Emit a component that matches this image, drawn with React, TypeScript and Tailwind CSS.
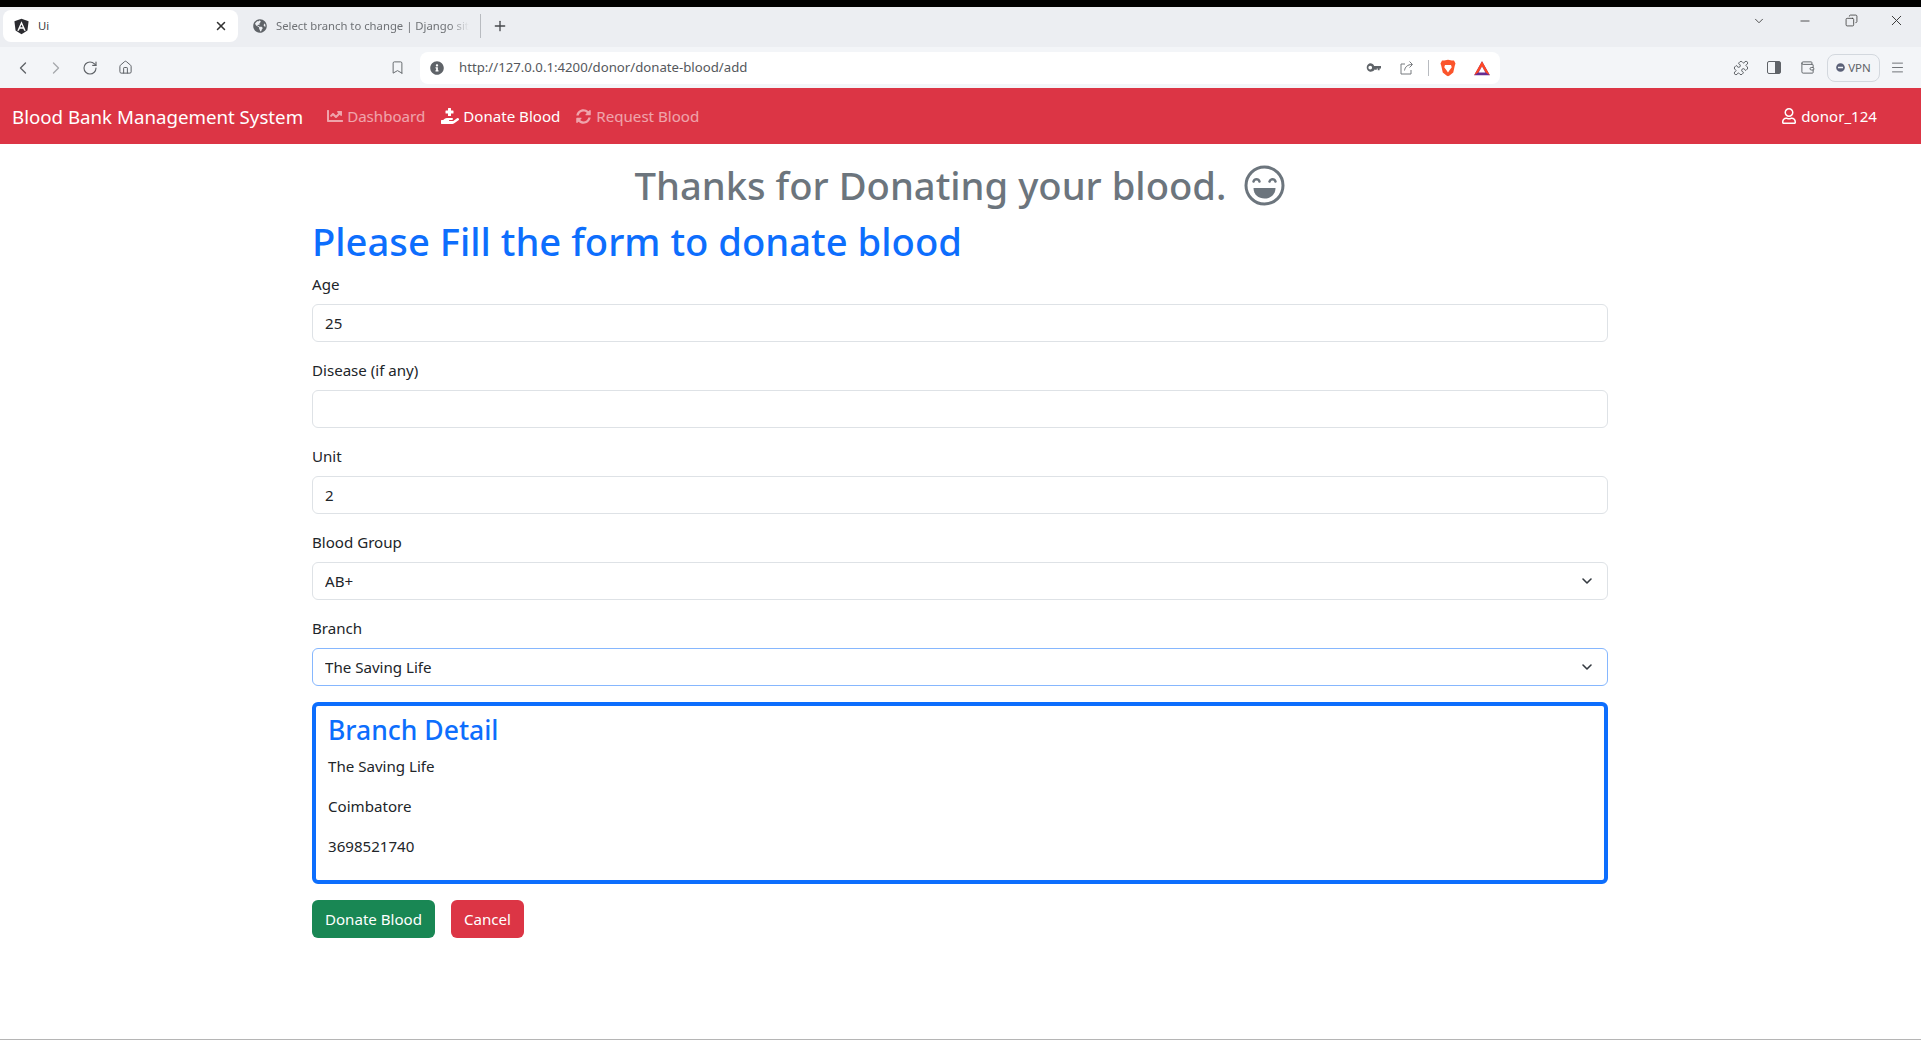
import React from "react";
import { FaChartLine, FaHandHoldingMedical, FaSyncAlt, FaRegUser, FaGlobeAmericas, FaInfoCircle, FaMinusCircle } from "react-icons/fa";
import { ChevronLeft, ChevronRight, RotateCw, Home, Bookmark, Puzzle, Wallet, X, Plus, ChevronDown, Minus, Menu, Copy } from "lucide-react";

function Field({ label, value }: { label: string; value: string }) {
  return (
    <div className="mb-4">
      <label className="block mb-2 h-6 leading-6">{label}</label>
      <input readOnly value={value} className="block w-full h-[38px] px-3 rounded-md border border-[#dee2e6] bg-white text-[#212529] outline-none" />
    </div>
  );
}

function SelectField({ label, value, focused }: { label: string; value: string; focused?: boolean }) {
  return (
    <div className="mb-4">
      <label className="block mb-2 h-6 leading-6">{label}</label>
      <div className="relative">
        <select
          defaultValue={value}
          className={`block w-full h-[38px] pl-3 pr-9 rounded-md border bg-white text-[#212529] outline-none appearance-none ${focused ? "border-[#86b7fe]" : "border-[#dee2e6]"}`}
        >
          <option>{value}</option>
        </select>
        <ChevronDown className="absolute right-[13px] top-[11px] w-4 h-4 text-[#343a40] pointer-events-none" strokeWidth={2.4} />
      </div>
    </div>
  );
}

export default function App() {
  return (
    <div className="h-[1040px] overflow-hidden bg-white text-[#212529] text-[15.1px] font-['Noto_Sans','Open_Sans',sans-serif] border-b border-[#b5b5b5] flex flex-col">
      <div className="h-[7px] bg-black shrink-0" />

      {/* tab strip */}
      <div className="h-10 shrink-0 bg-[#eceef2] flex items-center pl-[3px] text-[11.3px]">
        <div className="w-[235px] h-8 bg-white rounded-lg flex items-center pl-[10px] pr-[9px] -mt-[2px] text-[#3c4043]">
          <svg viewBox="0 0 24 24" className="w-[17px] h-[17px] shrink-0">
            <path d="M12 1 2 4.600l1.600 13.200L12 23l8.400-5.200L22 4.600z" fill="#2b2b30" />
            <path d="M12 4.500 6 18h2.300l1.200-3h5l1.200 3H18zm-1.700 8.700L12 9l1.700 4.200z" fill="#fff" />
          </svg>
          <span className="ml-[8px] flex-1">Ui</span>
          <X className="w-[14px] h-[14px] text-[#333] mr-[1px]" strokeWidth={2.6} />
        </div>
        <div className="flex items-center pl-[15px] -mt-[2px] text-[#6f7276] whitespace-nowrap">
          <FaGlobeAmericas className="w-[14px] h-[14px] text-[#5f6368] shrink-0" />
          <span className="ml-[9px] w-[193px] overflow-hidden [mask-image:linear-gradient(to_right,black_90%,transparent)]">Select branch to change | Django site</span>
        </div>
        <div className="w-px h-6 bg-[#b8bbc0] -mt-[2px] ml-[11px]" />
        <Plus className="w-4 h-4 ml-[11px] -mt-[2px] text-[#45484c]" strokeWidth={2} />
        <div className="flex-1" />
        <div className="flex items-center pr-[16px] -mt-[13px] text-[#3c3c3c]">
          <ChevronDown className="w-[14px] h-[14px]" strokeWidth={1.5} />
          <Minus className="w-[14px] h-[14px] ml-[32px]" strokeWidth={1.5} />
          <Copy className="w-[13px] h-[13px] ml-[33px] -scale-x-100" strokeWidth={1.5} />
          <X className="w-[17px] h-[17px] ml-[30px]" strokeWidth={1.4} />
        </div>
      </div>

      {/* toolbar */}
      <div className="h-[41px] shrink-0 bg-[#f3f5f8] flex items-center text-[#5f6368]">
        <div className="flex items-center pl-[13px]">
          <ChevronLeft className="w-[20px] h-[20px]" strokeWidth={1.6} />
          <ChevronRight className="w-[20px] h-[20px] ml-[13px] text-[#a6a9ad]" strokeWidth={1.6} />
          <RotateCw className="w-[16px] h-[16px] ml-[16px]" strokeWidth={1.7} />
          <Home className="w-[15px] h-[15px] ml-[20px]" strokeWidth={1.6} />
          <Bookmark className="w-[15px] h-[15px] ml-[257px]" strokeWidth={1.5} />
        </div>
        <div className="w-[1080px] h-8 ml-[15px] bg-white rounded-lg flex items-center pl-[10px] pr-[9px]">
          <FaInfoCircle className="w-[14px] h-[14px] text-[#5f6368]" />
          <span className="ml-[15px] flex-1 text-[13.2px] text-[#55585c]">http://127.0.0.1:4200/donor/donate-blood/add</span>
          <svg viewBox="0 0 16 16" className="w-[15px] h-[15px]" fill="#5f6368">
            <path fillRule="evenodd" d="M4.500 3.500a4.500 4.500 0 0 1 4.200 3H16v2.500h-1.500V11h-2V9h-1v1.500h-2V9.500a4.500 4.500 0 1 1-5-6zm0 2.500a2 2 0 1 0 0 4 2 2 0 0 0 0-4z" />
          </svg>
          <svg viewBox="0 0 16 16" className="w-[16px] h-[16px] ml-[18px]" fill="none" stroke="#777a7e" strokeWidth="1">
            <path d="M6 4H2v10h10v-4M5.500 10.500C6 7 8.500 4.500 13 4.500M10.500 1.500l3 3-3 3" />
          </svg>
          <div className="w-px h-4 ml-[13px] bg-[#b8bbc0]" />
          <svg viewBox="0 0 24 24" className="w-[18px] h-[18px] ml-[10px]">
            <path d="M12 1 7 2 4 2 2 6l1 3 2 9 5 4 2 1 2-1 5-4 2-9 1-3-2-4-3 0z" fill="#fb542b" />
            <path d="M8 8h8l1 3-3 4-2 3-2-3-3-4z" fill="#fff" />
          </svg>
          <svg viewBox="0 0 24 24" className="w-[18px] h-[18px] ml-[16px]">
            <path d="M12 3 1.500 21.500h21z" fill="#662d91" />
            <path d="M12 3 1.500 21.500 7 18 12 10l5 8 5.500 3.500z" fill="#ff4724" />
            <path d="M12 10 7.500 18h9z" fill="#fff" />
          </svg>
        </div>
        <div className="flex-1" />
        <div className="flex items-center pr-[16px]">
          <Puzzle className="w-[16px] h-[16px]" strokeWidth={1.5} />
          <div className="w-[14px] h-[13px] ml-[18px] border-[1.5px] border-[#5f6368] rounded-[2px] flex justify-end">
            <div className="w-[5px] bg-[#5f6368]" />
          </div>
          <Wallet className="w-[15px] h-[15px] ml-[19px]" strokeWidth={1.5} />
          <div className="w-[53px] h-7 ml-[12px] rounded-lg border border-[#d3d8de] flex items-center justify-center gap-[3px] text-[11.5px]">
            <FaMinusCircle className="w-[9px] h-[9px] text-[#5b6178]" />
            <span>VPN</span>
          </div>
          <Menu className="w-[15px] h-[15px] ml-[10px]" strokeWidth={1.4} />
        </div>
      </div>

      {/* navbar */}
      <nav className="h-[56px] shrink-0 bg-[#dc3545] flex items-center pl-3 pr-[44px] text-white">
        <span className="text-[18.7px] mr-6 relative top-[1px]">Blood Bank Management System</span>
        <span className="flex items-center gap-1 text-white/55 mr-4 mt-[1px]"><FaChartLine className="w-4 h-4" />Dashboard</span>
        <span className="flex items-center gap-1 mr-4 mt-[1px]"><FaHandHoldingMedical className="w-[18px] h-[18px]" />Donate Blood</span>
        <span className="flex items-center gap-[5px] text-white/55 mt-[1px]"><FaSyncAlt className="w-[15px] h-[15px]" />Request Blood</span>
        <span className="flex-1" />
        <span className="flex items-center gap-1 mt-[1px]"><FaRegUser className="w-4 h-4" />donor_124</span>
      </nav>

      {/* content */}
      <main className="w-[1296px] ml-[312px]">
        <h1 className="text-[38.2px] leading-[48px] font-medium text-[#6c757d] text-center mt-[17px] flex items-center justify-center gap-[18px]">
          Thanks for Donating your blood.
          <svg viewBox="0 0 41 41" className="w-[41px] h-[41px]" fill="none" stroke="currentColor" strokeWidth="3" strokeLinecap="round">
            <circle cx="20.500" cy="20.500" r="18.500" />
            <path d="M9.500 16.500c1-3 5-3 6 0M25.500 16.500c1-3 5-3 6 0" strokeWidth="2.400" />
            <path d="M9.500 23h22c0 6.500-5 10.500-11 10.500S9.500 29.500 9.500 23z" fill="currentColor" stroke="none" />
          </svg>
        </h1>
        <h1 className="text-[38.2px] leading-[48px] font-medium text-[#0d6efd] mt-2 mb-[7px]">Please Fill the form to donate blood</h1>
        <Field label="Age" value="25" />
        <Field label="Disease (if any)" value="" />
        <Field label="Unit" value="2" />
        <SelectField label="Blood Group" value="AB+" />
        <SelectField label="Branch" value="The Saving Life" focused />
        <div className="h-[182px] border-4 border-[#0d6efd] rounded-md px-3 mb-4">
          <h3 className="text-[26.5px] leading-[34px] font-medium text-[#0d6efd] mt-[7px] mb-[6.500px]">Branch Detail</h3>
          <p className="h-6 leading-6 mb-4">The Saving Life</p>
          <p className="h-6 leading-6 mb-4">Coimbatore</p>
          <p className="h-6 leading-6 mb-4">3698521740</p>
        </div>
        <div className="flex gap-4">
          <button className="h-[38px] w-[123px] rounded-md bg-[#198754] text-white">Donate Blood</button>
          <button className="h-[38px] w-[73px] rounded-md bg-[#dc3545] text-white">Cancel</button>
        </div>
      </main>
    </div>
  );
}
